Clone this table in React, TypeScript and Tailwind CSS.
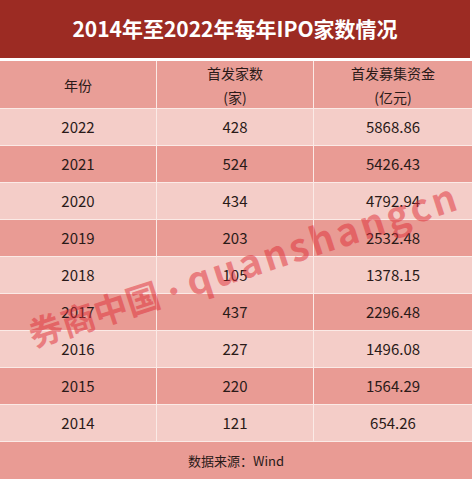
import React from "react";

const rows = [
  ["2022", "428", "5868.86"],
  ["2021", "524", "5426.43"],
  ["2020", "434", "4792.94"],
  ["2019", "203", "2532.48"],
  ["2018", "105", "1378.15"],
  ["2017", "437", "2296.48"],
  ["2016", "227", "1496.08"],
  ["2015", "220", "1564.29"],
  ["2014", "121", "654.26"],
];

const font = { fontFamily: '"Noto Sans CJK SC", "Open Sans", sans-serif' };

export default function App() {
  return (
    <div className="relative w-[472px] h-[479px] overflow-hidden bg-white" style={font}>
      <div className="h-[58px] w-[470px] bg-[#9c2b23] flex items-center justify-center text-white font-bold text-[21px]">
        2014年至2022年每年IPO家数情况
      </div>
      <div className="mt-[3px] h-[47px] grid grid-cols-[157px_157px_158px] bg-[#e99e97] text-[#2a1a18] text-[14px] leading-[24px]">
        <div className="flex items-center justify-center border-r border-[#fbeae6]">年份</div>
        <div className="flex flex-col items-center justify-center border-r border-[#fbeae6]">
          <span>首发家数</span>
          <span>(家)</span>
        </div>
        <div className="flex flex-col items-center justify-center">
          <span>首发募集资金</span>
          <span>(亿元)</span>
        </div>
      </div>
      {rows.map((r, i) => (
        <div
          key={r[0]}
          className={
            "h-[37px] border-t border-[#fbeae6] grid grid-cols-[157px_157px_158px] text-[15px] text-[#2a1a18] " +
            (i % 2 === 0 ? "bg-[#f4cdc8]" : "bg-[#e99b94]")
          }
        >
          <div className="flex items-center justify-center border-r border-[#fbeae6]">{r[0]}</div>
          <div className="flex items-center justify-center border-r border-[#fbeae6]">{r[1]}</div>
          <div className="flex items-center justify-center">{r[2]}</div>
        </div>
      ))}
      <div className="h-[38px] border-t border-[#fbeae6] bg-[#e99b94] flex items-center justify-center text-[13px] text-[#2a1a18]">
        数据来源：Wind
      </div>
      <div className="absolute left-[8px] top-[244px] w-[470px] -rotate-[18deg] origin-center whitespace-nowrap text-center font-bold leading-none text-[rgba(222,45,55,0.5)] pointer-events-none">
        <span className="text-[34px]">券商中国</span>
        <span className="text-[28px] mx-[1px]">•</span>
        <span className="text-[38px] tracking-[3px]">quanshangcn</span>
      </div>
    </div>
  );
}
